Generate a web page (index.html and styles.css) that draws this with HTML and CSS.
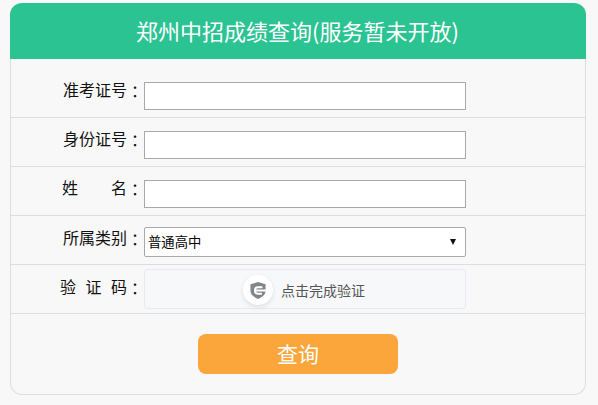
FILE: index.html
```html
<!DOCTYPE html>
<html lang="zh-CN">
  <head>
    <meta charset="UTF-8" />
    <title>郑州中招成绩查询</title>
    <link rel="stylesheet" href="styles.css">
  </head>
  <body>
    <div class="card">
      <div class="card-title">郑州中招成绩查询(服务暂未开放)</div>
      <form class="query-form">
        <div class="row">
          <label class="row-label">准考证号<span class="colon" lang="zh-TW">：</span></label>
          <input type="text" class="text-input" />
        </div>
        <div class="row">
          <label class="row-label">身份证号<span class="colon" lang="zh-TW">：</span></label>
          <input type="text" class="text-input" />
        </div>
        <div class="row">
          <label class="row-label label-name"><span>姓</span><span>名<span class="colon" lang="zh-TW">：</span></span></label>
          <input type="text" class="text-input" />
        </div>
        <div class="row row-select">
          <label class="row-label">所属类别<span class="colon" lang="zh-TW">：</span></label>
          <div class="select-box">
            <span>普通高中</span>
            <span class="select-arrow"></span>
          </div>
        </div>
        <div class="row row-captcha">
          <label class="row-label label-code"><span>验</span><span>证</span><span>码<span class="colon" lang="zh-TW">：</span></span></label>
          <div class="captcha">
            <span class="captcha-icon">
              <svg width="16" height="17" viewBox="0 0 18 19">
                <path d="M0.5 2.5 L9 0 L17.5 2.5 V10 C17.5 14 13.5 17 9 19 C4.5 17 0.5 14 0.5 10 Z" fill="#81868c" />
                <path d="M18 9.4 H6.5 M14 5.8 H9 C6.8 5.8 5.4 7.4 5.4 9.4 C5.4 11.6 7 13.2 9.2 13.2 H13.4" fill="none" stroke="#fff" stroke-width="2.2" />
              </svg>
            </span>
            <span class="captcha-text">点击完成验证</span>
          </div>
        </div>
        <div class="actions">
          <button type="button" class="submit">查询</button>
        </div>
      </form>
    </div>
  </body>
</html>
```

FILE: styles.css
```css
* {
  margin: 0;
  padding: 0;
  box-sizing: border-box;
}
body {
  font-family: "Noto Sans CJK SC", "Liberation Sans", sans-serif;
  background-color: #f8f8f8;
  color: #111;
  padding: 3px 12px 0 10px;
}
.card {
  width: 576px;
  height: 392px;
  border: 1px solid #ddd;
  border-top: none;
  border-radius: 12px;
}
.card-title {
  height: 56px;
  margin: 0 -1px;
  padding-right: 1px;
  background: #2cc393;
  color: #fff;
  font-size: 22px;
  line-height: 54px;
  text-align: center;
  border-radius: 12px 12px 0 0;
}
.query-form {
  padding-top: 10px;
}
.row {
  display: flex;
  height: 49px;
  padding-top: 13px;
  border-bottom: 1px solid #ddd;
}
.row-label {
  width: 133px;
  margin-top: -1px;
  padding-right: 1px;
  font-size: 16px;
  line-height: 16px;
  text-align: right;
  flex-shrink: 0;
}
.colon {
  font-family: "Noto Sans CJK TC", sans-serif;
  vertical-align: -2px;
}
.label-name,
.label-code {
  display: flex;
  justify-content: space-between;
  text-align: left;
}
.label-name {
  padding-left: 51px;
}
.label-code {
  padding-left: 49px;
}
.text-input {
  width: 322px;
  height: 28px;
  border: 1px solid #a9a9a9;
  background: #fff;
}
.row-select {
  padding-top: 11px;
}
.row-select .row-label {
  padding-top: 3px;
}
.select-box {
  display: flex;
  align-items: center;
  justify-content: space-between;
  width: 322px;
  height: 30px;
  padding: 0 9px 1px 3px;
  border: 1px solid #a9a9a9;
  border-radius: 2px;
  background: #fff;
  font-size: 13.33px;
  color: #000;
}
.select-arrow {
  width: 0;
  height: 0;
  border-left: 3px solid transparent;
  border-right: 3px solid transparent;
  border-top: 6px solid #111;
}
.row-captcha {
  padding-top: 4px;
}
.row-captcha .row-label {
  padding-top: 10px;
}
.captcha {
  display: flex;
  align-items: center;
  justify-content: center;
  gap: 8px;
  width: 322px;
  height: 40px;
  padding: 2px 2px 0 0;
  border: 1px solid #e8eaef;
  border-radius: 3px;
  background: #f7f8fa;
}
.captcha-icon {
  display: flex;
  align-items: center;
  justify-content: center;
  width: 30px;
  height: 30px;
  border-radius: 50%;
  background: #fff;
  box-shadow: 0 2px 5px rgba(0, 0, 0, 0.1);
}
.captcha-text {
  font-size: 14px;
  color: #555;
}
.actions {
  display: flex;
  justify-content: center;
  padding-top: 20px;
}
.submit {
  width: 200px;
  height: 40px;
  padding-bottom: 3px;
  border: none;
  border-radius: 8px;
  background: #fba63a;
  color: #fff;
  font-family: inherit;
  font-size: 21px;
}
```
